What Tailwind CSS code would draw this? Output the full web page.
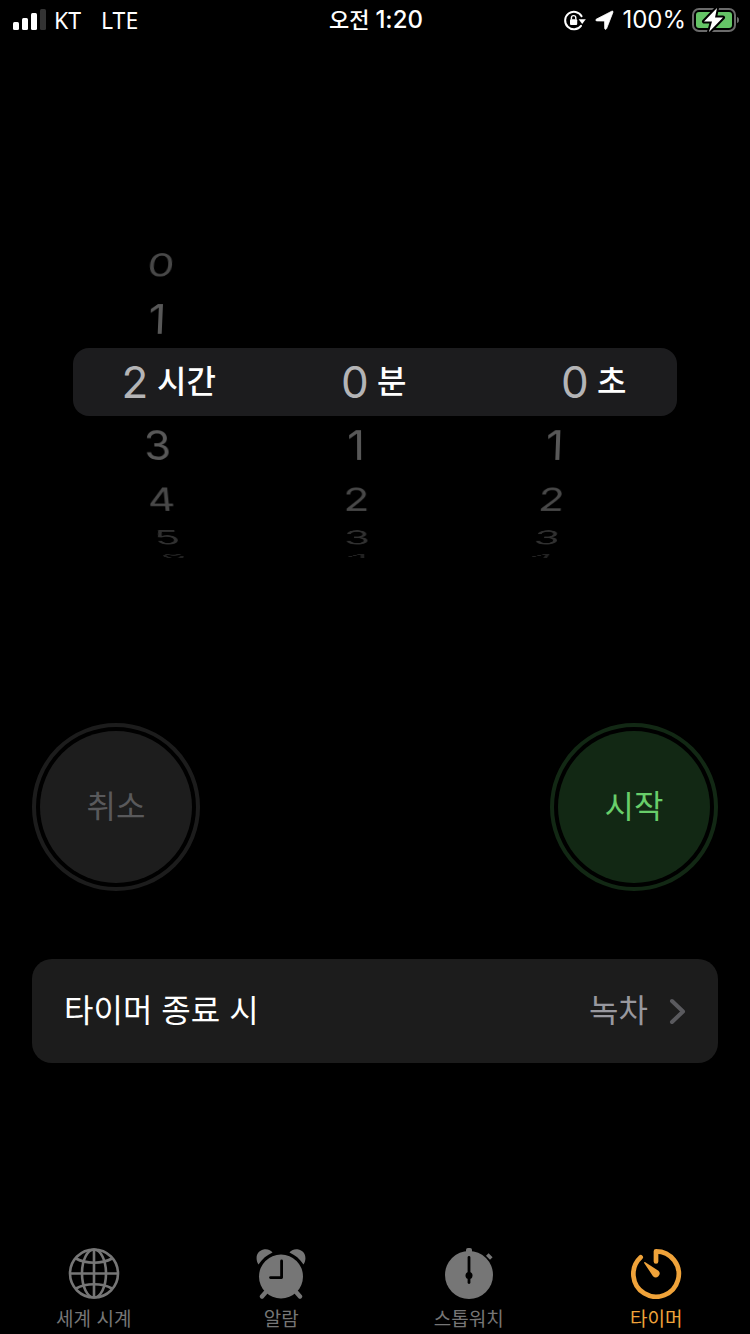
<!DOCTYPE html>
<html lang="ko">
  <head>
    <meta charset="UTF-8" />
    <meta name="viewport" content="width=device-width, initial-scale=1.0" />
    <title>타이머</title>
    <script src="https://cdn.jsdelivr.net/npm/@tailwindcss/browser@4"></script>
  </head>
  <body class="bg-black text-white font-['Inter','Noto_Sans_CJK_KR',sans-serif]">
    <div class="min-h-screen flex flex-col overflow-x-hidden">

      <!-- Status bar -->
      <header class="h-10 grid grid-cols-3 items-center pl-3 pr-2.5">
        <div class="flex items-center font-['Noto_Sans',sans-serif] text-[23px] leading-10">
          <svg class="w-9 h-6 mr-1.5" viewBox="0 0 36 24" fill="#fff" aria-hidden="true">
            <rect x="1" y="14" width="6" height="8" rx="1.5" />
            <rect x="10" y="10" width="6" height="12" rx="1.5" />
            <rect x="19" y="5" width="6" height="17" rx="1.5" />
            <rect x="28" y="1" width="6" height="21" rx="1.5" fill="#333" />
          </svg>
          <span>KT</span>
          <span class="ml-5">LTE</span>
        </div>
        <div class="text-center text-[22px] font-medium leading-10">오전 <span class="text-2xl leading-10">1:20</span></div>
        <div class="flex items-center justify-end text-2xl leading-10">
          <!-- rotation lock -->
          <svg class="w-6 h-6 mr-2 shrink-0" viewBox="0 0 24 24" fill="none" aria-hidden="true">
            <path d="M19.6 8.200A8.800 8.800 0 1 0 19 17.800" stroke="#fff" stroke-width="2" stroke-linecap="round" />
            <path d="M16.600 11.300h7.200l-3.600 4.600z" fill="#fff" />
            <rect x="8" y="11.200" width="7.200" height="5.800" rx="1" fill="#fff" />
            <path d="M9.400 11.500V9.800a2.200 2.200 0 0 1 4.400 0v1.700" stroke="#fff" stroke-width="1.400" />
          </svg>
          <!-- location -->
          <svg class="w-5 h-5 mr-2 shrink-0" viewBox="0 0 20 20" fill="#fff" aria-hidden="true">
            <path d="M17.800 1.200c.9-.4 1.500.3 1.100 1.200L12.600 18.600c-.5 1.200-1.900 1-1.900-.3l-.1-7.300-7.700-.1c-1.300 0-1.500-1.400-.3-1.900z" stroke="#fff" stroke-width=".8" />
          </svg>
          <span>100%</span>
          <!-- battery, charging -->
          <svg class="w-12 h-7 ml-1.5 shrink-0" viewBox="0 0 48 28" fill="none" aria-hidden="true">
            <rect x="1" y="3" width="42" height="22" rx="6" stroke="#6b6b6b" stroke-width="2" />
            <rect x="4" y="6" width="36" height="16" rx="3" fill="#65c466" />
            <path d="M45 11c1.800.5 2 2 2 3s-.2 2.500-2 3z" fill="#6b6b6b" />
            <path d="M25 2 12 15.500h8L17 26 31 11.500h-8z" fill="#fff" stroke="#000" stroke-width="4" stroke-linejoin="round" />
            <path d="M25 2 12 15.500h8L17 26 31 11.500h-8z" fill="#fff" />
          </svg>
        </div>
      </header>

      <main class="flex flex-col">
        <!-- Picker: the wheels turn behind the flat selection bar -->
        <section class="mt-[165px] grid h-[354px] overflow-hidden">
          <div class="col-start-1 row-start-1 pl-14 pr-[94px] grid grid-cols-3 items-center perspective-[1700px] text-[44px] leading-[50px] text-center">
            <ul class="grid transform-3d">
              <li class="col-start-1 row-start-1 text-[#484848] [transform:translateZ(-195px)_rotateX(38deg)_translateZ(195px)]">0</li>
              <li class="col-start-1 row-start-1 text-[#585858] [transform:translateZ(-195px)_rotateX(19deg)_translateZ(195px)]">1</li>
              <li class="col-start-1 row-start-1 text-[#585858] [transform:translateZ(-195px)_rotateX(-19deg)_translateZ(195px)]">3</li>
              <li class="col-start-1 row-start-1 text-[#484848] [transform:translateZ(-195px)_rotateX(-38deg)_translateZ(195px)]">4</li>
              <li class="col-start-1 row-start-1 text-[#303030] [transform:translateZ(-195px)_rotateX(-57deg)_translateZ(195px)]">5</li>
              <li class="col-start-1 row-start-1 text-[#222222] [transform:translateZ(-195px)_rotateX(-76deg)_translateZ(195px)]">6</li>
            </ul>
            <ul class="grid transform-3d">
              <li class="col-start-1 row-start-1 text-[#585858] [transform:translateZ(-195px)_rotateX(-19deg)_translateZ(195px)]">1</li>
              <li class="col-start-1 row-start-1 text-[#484848] [transform:translateZ(-195px)_rotateX(-38deg)_translateZ(195px)]">2</li>
              <li class="col-start-1 row-start-1 text-[#303030] [transform:translateZ(-195px)_rotateX(-57deg)_translateZ(195px)]">3</li>
              <li class="col-start-1 row-start-1 text-[#222222] [transform:translateZ(-195px)_rotateX(-76deg)_translateZ(195px)]">4</li>
            </ul>
            <ul class="grid transform-3d">
              <li class="col-start-1 row-start-1 text-[#585858] [transform:translateZ(-195px)_rotateX(-19deg)_translateZ(195px)]">1</li>
              <li class="col-start-1 row-start-1 text-[#484848] [transform:translateZ(-195px)_rotateX(-38deg)_translateZ(195px)]">2</li>
              <li class="col-start-1 row-start-1 text-[#303030] [transform:translateZ(-195px)_rotateX(-57deg)_translateZ(195px)]">3</li>
              <li class="col-start-1 row-start-1 text-[#222222] [transform:translateZ(-195px)_rotateX(-76deg)_translateZ(195px)]">4</li>
            </ul>
          </div>
          <div class="col-start-1 row-start-1 self-center mx-[73px] h-[68px] rounded-2xl bg-[#1c1c1e] pl-12 grid grid-cols-[220px_220px_1fr] items-center">
            <div class="flex items-center gap-2">
              <span class="w-7 text-center text-[44px] leading-[68px] text-[#b4b4b6]">2</span>
              <span class="text-[32px] leading-[68px] font-medium">시간</span>
            </div>
            <div class="flex items-center gap-2">
              <span class="w-7 text-center text-[44px] leading-[68px] text-[#b4b4b6]">0</span>
              <span class="text-[32px] leading-[68px] font-medium">분</span>
            </div>
            <div class="flex items-center gap-2">
              <span class="w-7 text-center text-[44px] leading-[68px] text-[#b4b4b6]">0</span>
              <span class="text-[32px] leading-[68px] font-medium">초</span>
            </div>
          </div>
        </section>

        <!-- Buttons -->
        <div class="mt-[164px] px-8 flex justify-between">
          <button class="size-[168px] rounded-full border-4 border-[#1c1c1c] p-1">
            <span class="size-full rounded-full bg-[#1d1d1d] flex items-center justify-center text-[32px] text-[#59595b]">취소</span>
          </button>
          <button class="size-[168px] rounded-full border-4 border-[#122814] p-1">
            <span class="size-full rounded-full bg-[#122814] flex items-center justify-center text-[32px] text-[#68ce6a]">시작</span>
          </button>
        </div>

        <!-- Timer end sound -->
        <button class="mt-[68px] mx-8 h-[104px] rounded-[20px] bg-[#1c1c1c] px-8 flex items-center text-[32px]">
          <span>타이머 종료 시</span>
          <span class="ml-auto text-[#98989f]">녹차</span>
          <svg class="w-[18px] h-7 ml-5" viewBox="0 0 18 28" fill="none" aria-hidden="true">
            <path d="M4 4l11 10.500L4 25" stroke="#5a5a5e" stroke-width="4" stroke-linecap="round" stroke-linejoin="round" />
          </svg>
        </button>
      </main>

      <!-- Tab bar -->
      <nav class="mt-auto grid grid-cols-4 text-[19px] leading-7 text-[#767676]">
        <a href="#world" class="flex flex-col items-center gap-[7px]">
          <svg class="size-[52px]" viewBox="0 0 52 52" fill="none" stroke="currentColor" stroke-width="2.6" aria-hidden="true">
            <circle cx="26" cy="26.500" r="24" />
            <ellipse cx="26" cy="26.500" rx="12" ry="24" />
            <path d="M26 2.500v48M2 26.500h48" />
            <path d="M8 11.500c10 5.600 26 5.600 36 0M8 41.500c10-5.600 26-5.600 36 0" />
          </svg>
          <span>세계 시계</span>
        </a>
        <a href="#alarm" class="flex flex-col items-center gap-[7px]">
          <svg class="size-[52px]" viewBox="0 0 52 52" fill="currentColor" aria-hidden="true">
            <path d="M3.500 17.500C-.5 11 2 4 8.500 2.600c3.800-.8 7.500.6 9 3C12 8 7 12.200 3.500 17.500z" />
            <path d="M48.500 17.500C52.500 11 50 4 43.500 2.600c-3.800-.8-7.500.6-9 3C40 8 45 12.200 48.500 17.500z" />
            <path d="M7 49.500l7-8M45 49.500l-7-8" stroke="currentColor" stroke-width="4.400" stroke-linecap="round" />
            <circle cx="26" cy="29.500" r="22" />
            <path d="M26.600 14v16.600H15.500" fill="none" stroke="#000" stroke-width="2.800" stroke-linecap="round" stroke-linejoin="round" />
          </svg>
          <span>알람</span>
        </a>
        <a href="#stopwatch" class="flex flex-col items-center gap-[7px]">
          <svg class="size-[52px]" viewBox="0 0 52 52" fill="currentColor" aria-hidden="true">
            <circle cx="26" cy="28" r="24" />
            <rect x="23" y="1" width="6" height="7" rx="2" />
            <path d="M44.300 7.500l4 4" stroke="currentColor" stroke-width="3.600" />
            <path d="M26 10.500v25" stroke="#000" stroke-width="2.800" stroke-linecap="round" />
            <circle cx="26" cy="28.500" r="3.500" fill="#000" />
          </svg>
          <span>스톱워치</span>
        </a>
        <a href="#timer" class="flex flex-col items-center gap-[7px] text-[#f0a33a]" aria-current="page">
          <svg class="size-[52px]" viewBox="0 0 52 52" fill="none" aria-hidden="true">
            <path d="M26 14.500V4.300A22.700 22.700 0 1 1 10.700 10.300" stroke="currentColor" stroke-width="4.700" stroke-linecap="round" stroke-linejoin="round" />
            <path d="M14.300 15.200c.3-.3.700-.3 1 0l13.100 8.600a3.800 3.800 0 1 1-5.400 5.400L14.300 16.200c-.3-.3-.3-.7 0-1z" fill="currentColor" />
          </svg>
          <span>타이머</span>
        </a>
      </nav>
    </div>
  </body>
</html>
